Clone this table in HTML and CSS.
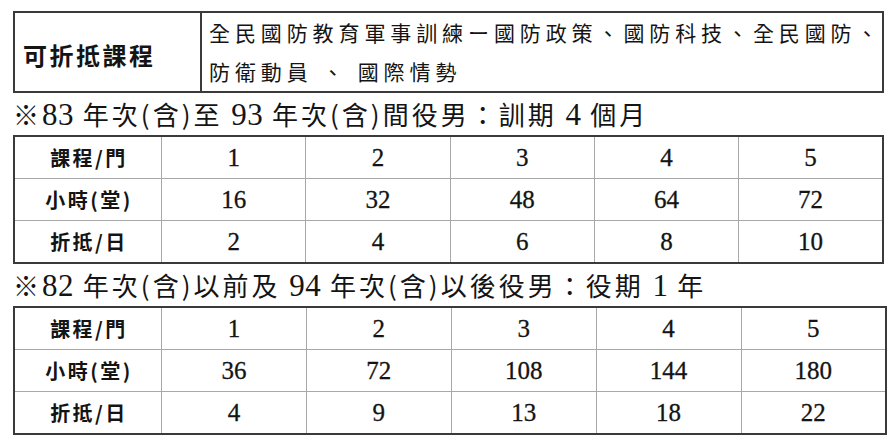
FILE: index.html
```html
<!DOCTYPE html>
<html lang="zh-Hant">
<head>
<meta charset="utf-8">
<title>可折抵課程</title>
<link rel="stylesheet" href="styles.css">
</head>
<body>
<div class="page">
  <table class="intro">
    <tr>
      <th class="intro-label">可折抵課程</th>
      <td class="intro-text">全民國防教育軍事訓練ー國防政策、國防科技、全民國防、<br>防衛動員 、 國際情勢</td>
    </tr>
  </table>

  <h2 class="heading">※<span class="num">83</span> 年次(含)至 <span class="num">93</span> 年次(含)間役男：訓期 <span class="num">4</span> 個月</h2>
  <table class="grid">
    <tr><th>課程/門</th><td>1</td><td>2</td><td>3</td><td>4</td><td>5</td></tr>
    <tr><th>小時(堂)</th><td>16</td><td>32</td><td>48</td><td>64</td><td>72</td></tr>
    <tr><th>折抵/日</th><td>2</td><td>4</td><td>6</td><td>8</td><td>10</td></tr>
  </table>

  <h2 class="heading">※<span class="num">82</span> 年次(含)以前及 <span class="num">94</span> 年次(含)以後役男：役期 <span class="num">1</span> 年</h2>
  <table class="grid grid-wide">
    <tr><th>課程/門</th><td>1</td><td>2</td><td>3</td><td>4</td><td>5</td></tr>
    <tr><th>小時(堂)</th><td>36</td><td>72</td><td>108</td><td>144</td><td>180</td></tr>
    <tr><th>折抵/日</th><td>4</td><td>9</td><td>13</td><td>18</td><td>22</td></tr>
  </table>
</div>
</body>
</html>
```

FILE: styles.css
```css
html, body {
  margin: 0;
  padding: 0;
  background: #ffffff;
}

body {
  color: #141414;
  font-family: "Liberation Serif", "Noto Sans CJK TC", serif;
}

.page {
  padding: 11px 0 0 13px;
}

table {
  border-collapse: collapse;
  table-layout: fixed;
}

.intro {
  width: 871px;
  height: 82px;
  border: 2px solid #3a3a3a;
}

.intro-label {
  width: 177px;
  border-right: 2px solid #3a3a3a;
  text-align: left;
  padding: 4px 0 0 8px;
  font-family: "Noto Sans CJK TC", sans-serif;
  font-weight: 700;
  font-size: 24px;
  letter-spacing: 2.5px;
}

.intro-text {
  padding: 0 0 0 7px;
  font-family: "Noto Sans CJK TC", sans-serif;
  font-weight: 400;
  font-size: 21px;
  line-height: 39px;
  letter-spacing: 4.9px;
  white-space: nowrap;
  vertical-align: middle;
}

.heading {
  margin: 0;
  height: 42px;
  line-height: 42px;
  overflow: hidden;
  font-family: "Noto Sans CJK TC", sans-serif;
  font-weight: 400;
  font-size: 26px;
  letter-spacing: 3px;
  white-space: nowrap;
}

.heading .num {
  font-family: "Liberation Serif", serif;
  font-size: 31px;
  line-height: 0;
  letter-spacing: 0.5px;
}

.grid {
  width: 871px;
  border: 2px solid #3a3a3a;
}

.grid-wide {
  width: 874px;
}

.grid th,
.grid td {
  height: 41px;
  padding: 0;
  border: 1px solid #a8a8a8;
  text-align: center;
  vertical-align: middle;
}

.grid th {
  width: 144px;
  padding-left: 2px;
  font-family: "Noto Sans CJK TC", sans-serif;
  font-weight: 700;
  font-size: 20px;
  letter-spacing: 2.5px;
}

.grid td {
  font-family: "Liberation Serif", serif;
  font-size: 25px;
  -webkit-text-stroke: 0.3px #141414;
}

.grid tr:first-child th,
.grid tr:first-child td {
  border-top: 2px solid #3a3a3a;
}

.grid tr:last-child th,
.grid tr:last-child td {
  border-bottom: 2px solid #3a3a3a;
}
```
